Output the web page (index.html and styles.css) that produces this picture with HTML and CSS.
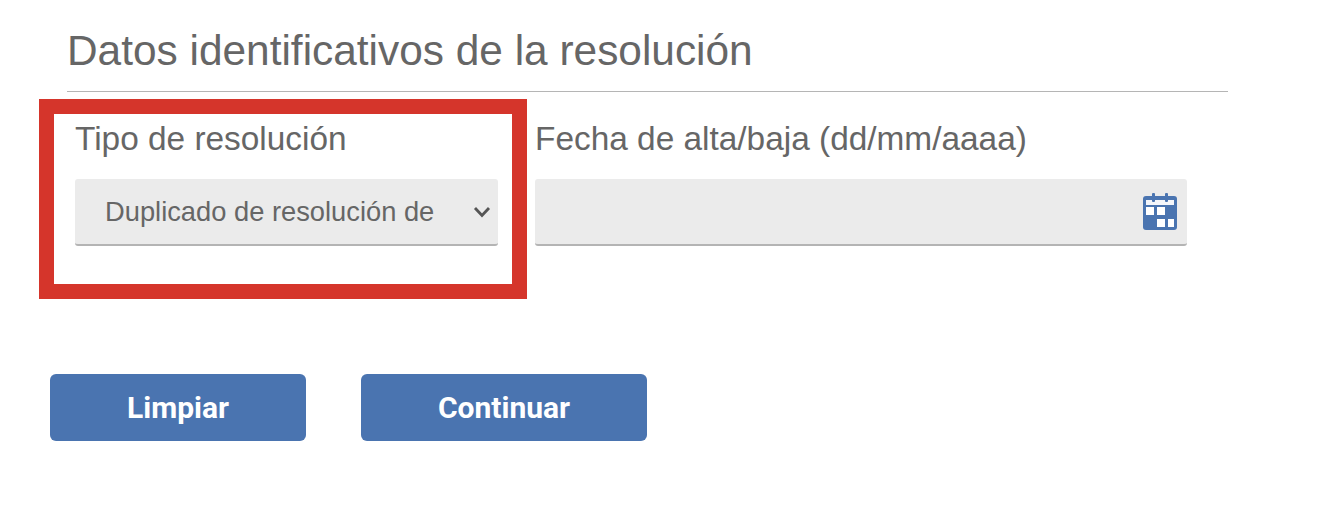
FILE: index.html
```html
<!DOCTYPE html>
<html lang="es">
<head>
  <meta charset="UTF-8" />
  <title>Datos identificativos de la resolución</title>
  <link rel="stylesheet" href="styles.css">
</head>
<body>
  <div class="page">
    <h2 class="title">Datos identificativos de la resolución</h2>
    <div class="fields">
      <div class="field field-type">
        <label class="field-label">Tipo de resolución</label>
        <div class="input-box">
          <span class="select-value">Duplicado de resolución de</span>
          <svg class="chevron" viewBox="0 0 18 12" width="18" height="12">
            <path d="M2 2 L9 9.5 L16 2" fill="none" stroke="#555" stroke-width="2.8"/>
          </svg>
        </div>
      </div>
      <div class="field field-date">
        <label class="field-label">Fecha de alta/baja (dd/mm/aaaa)</label>
        <div class="input-box date-box">
          <svg class="calendar" viewBox="0 0 34 37" width="34" height="37">
            <rect x="0" y="3" width="34" height="34" rx="3" fill="#4a74b0"/>
            <rect x="3" y="7" width="28" height="5" fill="#f4f6fa"/>
            <rect x="9" y="0" width="3" height="9" rx="1" fill="#4a74b0"/>
            <rect x="22" y="0" width="3" height="9" rx="1" fill="#4a74b0"/>
            <rect x="3" y="14" width="8" height="8" fill="#fff"/>
            <rect x="14" y="14" width="8" height="8" fill="#fff"/>
            <rect x="14" y="26" width="8" height="8" fill="#fff"/>
            <rect x="25" y="26" width="6" height="8" fill="#fff"/>
          </svg>
        </div>
      </div>
    </div>
    <div class="actions">
      <button class="btn btn-clear" type="button">Limpiar</button>
      <button class="btn btn-next" type="button">Continuar</button>
    </div>
    <div class="highlight"></div>
  </div>
</body>
</html>
```

FILE: styles.css
```css
body {
  margin: 0;
  background-color: #ffffff;
  font-family: "Liberation Sans", Arial, sans-serif;
  color: #666;
}
.page {
  position: relative;
  width: 1318px;
  height: 508px;
  overflow: hidden;
}
.title {
  margin: 0 90px 0 67px;
  height: 92px;
  box-sizing: border-box;
  padding-top: 27px;
  font-size: 42.4px;
  line-height: 48px;
  font-weight: normal;
  border-bottom: 1px solid #b5b5b5;
}
.fields {
  display: flex;
  gap: 37px;
  margin: 27px 0 0 75px;
}
.field-type {
  width: 423px;
}
.field-date {
  width: 652px;
}
.field-label {
  display: block;
  height: 60px;
  font-size: 33.4px;
  line-height: 40px;
}
.input-box {
  display: flex;
  align-items: center;
  justify-content: space-between;
  height: 67px;
  box-sizing: border-box;
  padding: 0 7px 0 30px;
  background-color: #ebebeb;
  border-bottom: 2px solid #b4b4b4;
  border-radius: 3px;
}
.select-value {
  font-size: 27.3px;
}
.date-box {
  justify-content: flex-end;
  padding-right: 10px;
}
.actions {
  display: flex;
  gap: 55px;
  margin: 128px 0 0 50px;
}
.btn {
  height: 67px;
  border: none;
  border-radius: 6px;
  background-color: #4a74b0;
  color: #fff;
  font-family: Roboto, sans-serif;
  font-size: 30px;
  font-weight: bold;
}
.btn-clear {
  width: 256px;
}
.btn-next {
  width: 286px;
}
.highlight {
  position: absolute;
  left: 39px;
  top: 99px;
  width: 488px;
  height: 200px;
  box-sizing: border-box;
  border: 15px solid #d5352b;
}
```
